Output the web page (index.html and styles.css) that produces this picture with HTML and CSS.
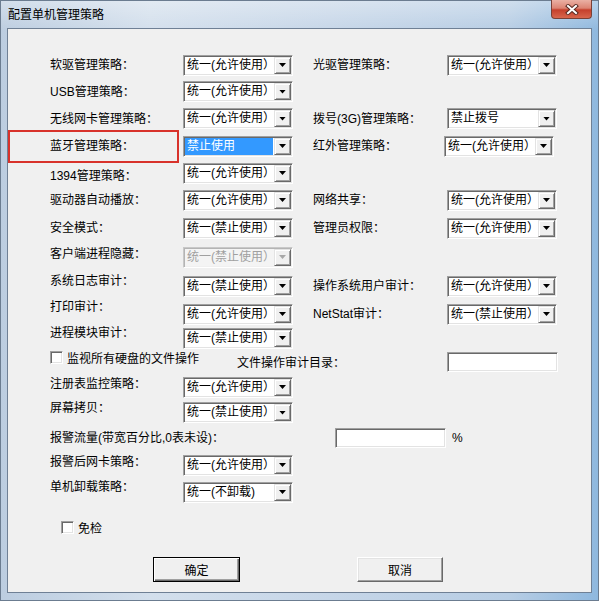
FILE: index.html
```html
<!DOCTYPE html>
<html lang="zh-CN">
<head>
    <meta charset="UTF-8">
    <title>配置单机管理策略</title>
    <link rel="stylesheet" href="styles.css">
</head>
<body>
    <div class="window">
        <div class="titlebar">
            <span class="title">配置单机管理策略</span>
            <div class="close">
                <svg width="14" height="11" viewBox="0 0 14 11">
                    <path d="M3 2 L11 9 M11 2 L3 9" stroke="#5a2a22" stroke-width="4" stroke-linecap="square"/>
                    <path d="M3 2 L11 9 M11 2 L3 9" stroke="#fff" stroke-width="2" stroke-linecap="square"/>
                </svg>
            </div>
        </div>

        <div class="client">
            <!-- 红框标注 -->
            <div class="mark"></div>

            <div class="row">
                <span class="lbl">软驱管理策略：</span>
                <div class="combo"><span class="val">统一(允许使用）</span><span class="arrow"></span></div>
                <span></span>
                <span class="lbl">光驱管理策略：</span>
                <div class="combo"><span class="val">统一(允许使用）</span><span class="arrow"></span></div>
            </div>
            <div class="row r27">
                <span class="lbl">USB管理策略：</span>
                <div class="combo"><span class="val">统一(允许使用）</span><span class="arrow"></span></div>
            </div>
            <div class="row r27">
                <span class="lbl">无线网卡管理策略：</span>
                <div class="combo"><span class="val">统一(允许使用）</span><span class="arrow"></span></div>
                <span></span>
                <span class="lbl">拨号(3G)管理策略：</span>
                <div class="combo"><span class="val">禁止拨号</span><span class="arrow"></span></div>
            </div>
            <div class="row r28">
                <span class="lbl">蓝牙管理策略：</span>
                <div class="combo"><span class="val sel">禁止使用</span><span class="arrow"></span></div>
                <span></span>
                <span class="lbl">红外管理策略：</span>
                <div class="combo shift"><span class="val">统一(允许使用）</span><span class="arrow"></span></div>
            </div>
            <div class="row">
                <span class="lbl down">1394管理策略：</span>
                <div class="combo"><span class="val">统一(允许使用）</span><span class="arrow"></span></div>
            </div>
            <div class="row r28">
                <span class="lbl">驱动器自动播放：</span>
                <div class="combo"><span class="val">统一(允许使用）</span><span class="arrow"></span></div>
                <span></span>
                <span class="lbl">网络共享：</span>
                <div class="combo"><span class="val">统一(允许使用）</span><span class="arrow"></span></div>
            </div>
            <div class="row r28">
                <span class="lbl">安全模式：</span>
                <div class="combo"><span class="val">统一(禁止使用）</span><span class="arrow"></span></div>
                <span></span>
                <span class="lbl">管理员权限：</span>
                <div class="combo"><span class="val">统一(允许使用）</span><span class="arrow"></span></div>
            </div>
            <div class="row r30">
                <span class="lbl up-sm">客户端进程隐藏：</span>
                <div class="combo disabled"><span class="val">统一(禁止使用）</span><span class="arrow"></span></div>
            </div>
            <div class="row r28">
                <span class="lbl up">系统日志审计：</span>
                <div class="combo"><span class="val">统一(禁止使用）</span><span class="arrow"></span></div>
                <span></span>
                <span class="lbl">操作系统用户审计：</span>
                <div class="combo"><span class="val">统一(允许使用）</span><span class="arrow"></span></div>
            </div>
            <div class="row">
                <span class="lbl up-lg">打印审计：</span>
                <div class="combo"><span class="val">统一(允许使用）</span><span class="arrow"></span></div>
                <span></span>
                <span class="lbl">NetStat审计：</span>
                <div class="combo"><span class="val">统一(禁止使用）</span><span class="arrow"></span></div>
            </div>
            <div class="row r23">
                <span class="lbl up">进程模块审计：</span>
                <div class="combo"><span class="val">统一(禁止使用）</span><span class="arrow"></span></div>
            </div>

            <div class="line r25">
                <label class="check-item raise"><span class="box"></span>监视所有硬盘的文件操作</label>
                <span class="lbl dir">文件操作审计目录：</span>
                <span class="edit"></span>
            </div>

            <div class="row">
                <span class="lbl up-sm">注册表监控策略：</span>
                <div class="combo"><span class="val">统一(允许使用）</span><span class="arrow"></span></div>
            </div>
            <div class="row r25">
                <span class="lbl up">屏幕拷贝：</span>
                <div class="combo"><span class="val">统一(禁止使用）</span><span class="arrow"></span></div>
            </div>
            <div class="line">
                <span class="lbl wide">报警流量(带宽百分比,0表未设)：</span>
                <span class="edit"></span>
                <span class="pct">%</span>
            </div>
            <div class="row r28">
                <span class="lbl up-sm">报警后网卡策略：</span>
                <div class="combo"><span class="val">统一(允许使用）</span><span class="arrow"></span></div>
            </div>
            <div class="row">
                <span class="lbl up">单机卸载策略：</span>
                <div class="combo"><span class="val">统一(不卸载)</span><span class="arrow"></span></div>
            </div>

            <div class="line exempt">
                <label class="check-item"><span class="box"></span>免检</label>
            </div>

            <div class="buttons">
                <button class="btn default">确定</button>
                <button class="btn cancel">取消</button>
            </div>
        </div>
    </div>
</body>
</html>
```

FILE: styles.css
```css
* {
    box-sizing: border-box;
}
body {
    margin: 0;
    font-family: "Liberation Sans", "Noto Sans CJK SC", sans-serif;
    font-size: 12px;
    color: #000000;
}
.window {
    width: 599px;
    height: 601px;
    border: 1px solid #6b7c90;
    padding: 0 6px 7px;
    display: flex;
    flex-direction: column;
    background:
        linear-gradient(180deg, rgba(255, 255, 255, 0.35), rgba(255, 255, 255, 0) 30px),
        linear-gradient(90deg, #bccde0 0%, #d3dfec 25%, #c6d6e8 55%, #b7cde4 85%, #8fb8de 100%);
}
.titlebar {
    height: 27px;
    display: flex;
    justify-content: space-between;
    align-items: center;
}
.title {
    padding-left: 1px;
    margin-bottom: 2px;
    font-family: "Noto Sans CJK SC", sans-serif;
}
.close {
    align-self: flex-start;
    margin-top: -1px;
    width: 41px;
    height: 19px;
    border: 1px solid #7a4036;
    border-top: none;
    border-radius: 0 0 4px 4px;
    background: linear-gradient(180deg, #eab0a4 0%, #dc8473 45%, #c5402c 55%, #d8664d 100%);
    display: flex;
    justify-content: center;
    align-items: center;
}
.client {
    position: relative;
    height: 565px;
    border: 1px solid #6f8095;
    background-color: #f0f0f0;
    padding: 23px 0 0 42px;
}
.mark {
    position: absolute;
    left: 0;
    top: 101px;
    width: 171px;
    height: 33px;
    border: 2px solid #d8322b;
}
.row {
    display: grid;
    grid-template-columns: 133px 110px 20px 134px 110px;
    align-items: center;
    height: 26px;
}
.line {
    display: flex;
    align-items: center;
    height: 26px;
}
.r23 { height: 23px; }
.r25 { height: 25px; }
.r27 { height: 27px; }
.r28 { height: 28px; }
.r30 { height: 30px; }
.lbl {
    white-space: nowrap;
    line-height: 14px;
}
.up-sm { margin-bottom: 6px; }
.up { margin-bottom: 10px; }
.up-lg { margin-bottom: 14px; }
.down { margin-top: 5px; }
.combo {
    width: 110px;
    height: 21px;
    display: flex;
    background-color: #ffffff;
    border: 1px solid;
    border-color: #a0a0a0 #ffffff #ffffff #a0a0a0;
    box-shadow: inset 1px 1px #696969, inset -1px -1px #e3e3e3;
    padding: 1px;
}
.combo.shift {
    margin-left: -3px;
}
.val {
    flex: 1;
    overflow: hidden;
    white-space: nowrap;
    padding-left: 2px;
    line-height: 17px;
}
.val.sel {
    background-color: #3399ff;
    color: #ffffff;
    margin-right: 1px;
}
.arrow {
    width: 17px;
    background-color: #f0f0f0;
    border: 1px solid;
    border-color: #e3e3e3 #696969 #696969 #e3e3e3;
    box-shadow: inset 1px 1px #ffffff, inset -1px -1px #a0a0a0;
    display: flex;
    justify-content: center;
    align-items: center;
}
.arrow::before {
    content: "";
    width: 7px;
    height: 4px;
    background-color: #000000;
    clip-path: polygon(0 0, 100% 0, 50% 100%);
}
.combo.disabled {
    background-color: #f4f4f4;
    border-color: #c8c8c8 #ffffff #ffffff #c8c8c8;
    box-shadow: inset 1px 1px #b4b4b4, inset -1px -1px #f0f0f0;
}
.combo.disabled .val {
    color: #a0a0a0;
}
.combo.disabled .arrow::before {
    background-color: #a8a8a8;
}
.check-item {
    display: flex;
    align-items: center;
    gap: 4px;
    width: 187px;
}
.check-item.raise {
    margin-bottom: 8px;
}
.box {
    width: 13px;
    height: 13px;
    background-color: #ffffff;
    border: 1px solid;
    border-color: #a0a0a0 #ffffff #ffffff #a0a0a0;
    box-shadow: inset 1px 1px #696969, inset -1px -1px #e3e3e3;
}
.lbl.dir {
    width: 210px;
    margin-top: 3px;
}
.lbl.wide {
    width: 285px;
}
.edit {
    width: 111px;
    height: 20px;
    background-color: #ffffff;
    border: 1px solid;
    border-color: #a0a0a0 #ffffff #ffffff #a0a0a0;
    box-shadow: inset 1px 1px #696969, inset -1px -1px #e3e3e3;
}
.pct {
    margin-left: 6px;
}
.exempt {
    height: 45px;
    padding-left: 11px;
}
.buttons {
    display: flex;
    margin-top: 7px;
    padding-left: 103px;
    gap: 117px;
}
.btn {
    width: 86px;
    height: 25px;
    font-family: "Noto Sans CJK SC", sans-serif;
    font-size: 12px;
    padding: 0;
    background-color: #f0f0f0;
    border: 1px solid;
    border-color: #ffffff #696969 #696969 #ffffff;
    box-shadow: inset -1px -1px #a0a0a0, inset 1px 1px #e3e3e3;
}
.btn.default {
    width: 87px;
    border: 1px solid #000000;
    box-shadow: inset 1px 1px #ffffff, inset -1px -1px #696969, inset -2px -2px #a0a0a0;
}
```
